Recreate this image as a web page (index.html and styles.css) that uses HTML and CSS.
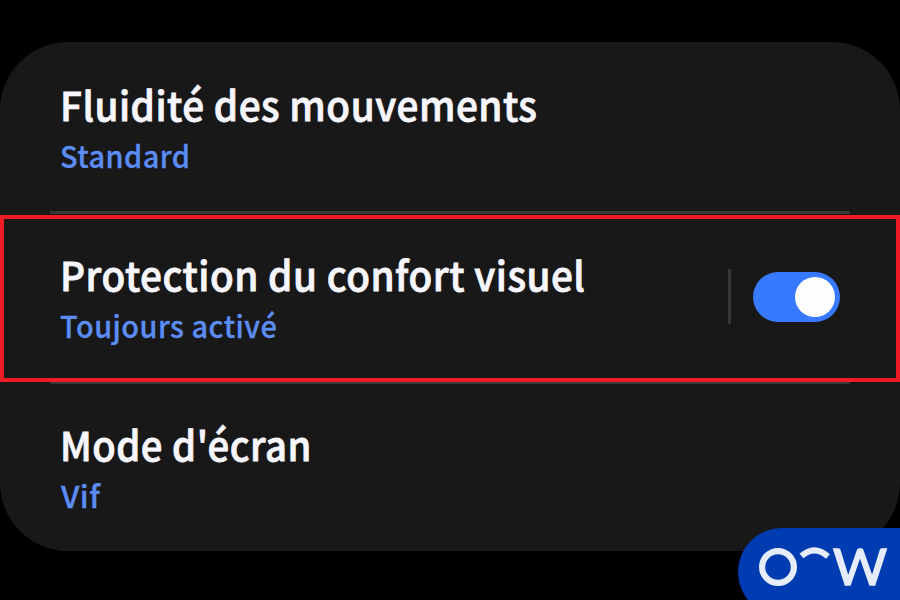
FILE: index.html
```html
<!DOCTYPE html>
<html lang="fr">
<head>
<meta charset="utf-8">
<title>Affichage</title>
<link rel="stylesheet" href="styles.css">
</head>
<body>
<main class="card">
  <section class="row">
    <div class="labels">
      <h2 class="title">Fluidité des mouvements</h2>
      <p class="value">Standard</p>
    </div>
  </section>
  <section class="row row-highlight">
    <div class="labels">
      <h2 class="title">Protection du confort visuel</h2>
      <p class="value">Toujours activé</p>
    </div>
    <div class="control">
      <span class="separator"></span>
      <span class="toggle"><span class="knob"></span></span>
    </div>
  </section>
  <section class="row">
    <div class="labels">
      <h2 class="title title-short">Mode d'écran</h2>
      <p class="value value-short">Vif</p>
    </div>
  </section>
</main>
<div class="badge">
  <svg class="logo" width="162" height="72" viewBox="738 528 162 72">
    <circle cx="778" cy="567" r="15.900" fill="none" stroke="#e6ecfa" stroke-width="6.200"/>
    <path d="M801.500 556Q814.500 544.500 828 556.500" fill="none" stroke="#e6ecfa" stroke-width="6"/>
    <text class="logo-letter" x="833" y="585" textLength="54" lengthAdjust="spacingAndGlyphs">W</text>
  </svg>
</div>
</body>
</html>
```
FILE: styles.css
```css
*, *::before, *::after { box-sizing: border-box; }
body {
  margin: 0;
  width: 900px;
  height: 600px;
  padding-top: 42px;
  background: #000;
  overflow: hidden;
  position: relative;
  font-family: "Noto Sans CJK SC", "Noto Sans", sans-serif;
}
.card {
  height: 509px;
  background: #181818;
  border-radius: 68px;
}
.row {
  position: relative;
  display: flex;
  justify-content: space-between;
  height: 170px;
  padding: 37px 60px 0;
}
.row:not(:last-child)::after {
  content: "";
  position: absolute;
  left: 50px;
  right: 50px;
  bottom: -2px;
  height: 3px;
  background: #373737;
}
.row-highlight::before {
  content: "";
  position: absolute;
  z-index: 1;
  left: 0;
  right: 0;
  top: 3px;
  height: 167px;
  border: 4px solid #ed1c24;
}
.title, .value {
  margin: 0;
  white-space: nowrap;
  transform-origin: 0 50%;
}
.title {
  height: 52px;
  line-height: 50px;
  font-size: 40px;
  font-weight: 500;
  letter-spacing: 0.5px;
  color: #f7f6fd;
  -webkit-text-stroke: 0.8px #f7f6fd;
  transform: scaleX(0.968);
}
.title-short { transform: scaleX(0.957); }
.value {
  height: 48px;
  line-height: 48px;
  font-size: 30px;
  font-weight: 500;
  letter-spacing: 0.5px;
  color: #5c8df5;
  -webkit-text-stroke: 0.3px #5c8df5;
  transform: scaleX(0.963);
}
.value-short { transform: translateX(1px) scaleX(1.03); }
.control {
  display: flex;
  align-items: center;
  gap: 22px;
  height: 55px;
  margin-top: 20px;
}
.separator { width: 3px; height: 55px; background: #363636; }
.toggle {
  display: flex;
  align-items: center;
  justify-content: flex-end;
  width: 87px;
  height: 50px;
  padding-right: 5px;
  border-radius: 25px;
  background: #387aff;
}
.knob { width: 40px; height: 40px; border-radius: 50%; background: #fdfdfd; }
.badge {
  position: absolute;
  left: 738px;
  top: 528px;
  width: 162px;
  height: 88px;
  border-radius: 44px 0 0 44px;
  background: #003cb1;
}
.logo { display: block; }
.logo-letter { font: 400 50px Lato, sans-serif; fill: #e6ecfa; stroke: #e6ecfa; stroke-width: 1.6; }
```
